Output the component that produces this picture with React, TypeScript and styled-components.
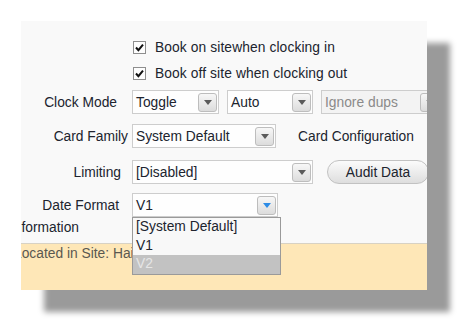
import styled, { createGlobalStyle } from "styled-components";

const GlobalStyle = createGlobalStyle`
  html, body {
    margin: 0;
    padding: 0;
    background: #ffffff;
  }
  body {
    font-family: "Liberation Sans", Arial, sans-serif;
    font-size: 13.8px;
    color: #20242e;
  }
`;

interface SelectProps {
  value: string;
  width: number;
  disabled?: boolean;
  active?: boolean;
}

const Arrow = ({ color }: { color: string }) => (
  <svg width="8" height="5" viewBox="0 0 8 5">
    <path d="M0 0 L8 0 L4 5 Z" fill={color} />
  </svg>
);

const Select = ({ value, width, disabled, active }: SelectProps) => (
  <SelectBox $width={width} $disabled={disabled}>
    <SelectText $disabled={disabled}>{value}</SelectText>
    <ArrowButton>
      <Arrow color={active ? "#2c8be6" : disabled ? "#9a9a9a" : "#5a5a5a"} />
    </ArrowButton>
  </SelectBox>
);

const Check = () => (
  <CheckBox>
    <svg width="11" height="11" viewBox="0 0 11 11">
      <path d="M2 5.5 L4.4 8.2 L9 2.6" fill="none" stroke="#111" strokeWidth="2" />
    </svg>
  </CheckBox>
);

const App = () => {
  return (
    <>
      <GlobalStyle />
      <Stage>
        <Panel>
          <Main>
            <CheckRow $top={20}>
              <Check />
              <CheckLabel>Book on sitewhen clocking in</CheckLabel>
            </CheckRow>
            <CheckRow $top={13}>
              <Check />
              <CheckLabel>Book off site when clocking out</CheckLabel>
            </CheckRow>

            <FormRow $top={10}>
              <Label $pad={15}>Clock Mode</Label>
              <Controls>
                <Select value="Toggle" width={87} />
                <Select value="Auto" width={86} />
                <Select value="Ignore dups" width={120} disabled />
              </Controls>
            </FormRow>

            <FormRow $top={10}>
              <Label $pad={4}>Card Family</Label>
              <Controls>
                <Select value="System Default" width={144} />
                <SideLabel>Card Configuration</SideLabel>
                <EdgeBox />
              </Controls>
            </FormRow>

            <FormRow $top={12}>
              <Label $pad={11}>Limiting</Label>
              <Controls>
                <Select value="[Disabled]" width={181} />
                <PillButton>Audit Data</PillButton>
              </Controls>
            </FormRow>

            <FormRow $top={9}>
              <Label $pad={13}>Date Format</Label>
              <Controls>
                <DropWrap>
                  <Select value="V1" width={146} active />
                  <DropList>
                    <DropItem>[System Default]</DropItem>
                    <DropItem>V1</DropItem>
                    <DropItem $selected>V2</DropItem>
                  </DropList>
                </DropWrap>
              </Controls>
            </FormRow>

            <SectionHeading>Information</SectionHeading>
          </Main>
          <Footer>
            <FooterText>Located in Site: Hailsham</FooterText>
          </Footer>
        </Panel>
      </Stage>
    </>
  );
};

export default App;

const Stage = styled.div`
  padding: 21px 0 0 21px;
  height: 329px;
  box-sizing: border-box;
`;

const Panel = styled.div`
  width: 406px;
  height: 269px;
  background: #f9f9f9;
  box-shadow: 23px 22px 6px #9a9a9a;
  display: flex;
  flex-direction: column;
  overflow: hidden;
  position: relative;
`;

const Main = styled.div`
  height: 222px;
  display: flex;
  flex-direction: column;
  flex-shrink: 0;
`;

const CheckRow = styled.div<{ $top: number }>`
  display: flex;
  align-items: center;
  gap: 9px;
  margin-top: ${(p) => p.$top}px;
  padding-left: 112px;
  height: 13px;
`;

const CheckBox = styled.div`
  width: 11px;
  height: 11px;
  border: 1px solid #8e8e8e;
  background: #fdfdfd;
  display: flex;
  align-items: center;
  justify-content: center;
  flex-shrink: 0;
`;

const CheckLabel = styled.span`
  white-space: nowrap;
  letter-spacing: 0.1px;
`;

const FormRow = styled.div<{ $top: number }>`
  display: flex;
  align-items: center;
  height: 24px;
  margin-top: ${(p) => p.$top}px;
`;

const Label = styled.div<{ $pad: number }>`
  width: 111px;
  flex-shrink: 0;
  box-sizing: border-box;
  text-align: right;
  padding-right: ${(p) => p.$pad}px;
  white-space: nowrap;
`;

const Controls = styled.div`
  display: flex;
  align-items: center;
  gap: 8px;
  flex-shrink: 0;
`;

const SelectBox = styled.div<{ $width: number; $disabled?: boolean }>`
  width: ${(p) => p.$width}px;
  height: 24px;
  box-sizing: border-box;
  flex-shrink: 0;
  border: 1px solid #cdcdcd;
  background: ${(p) => (p.$disabled ? "#f3f3f3" : "#fefefe")};
  display: flex;
  align-items: center;
  justify-content: space-between;
  padding: 0 1px 0 3px;
  overflow: hidden;
`;

const SelectText = styled.span<{ $disabled?: boolean }>`
  color: ${(p) => (p.$disabled ? "#8a8a8a" : "#20242e")};
  white-space: nowrap;
`;

const ArrowButton = styled.div`
  width: 19px;
  height: 19px;
  box-sizing: border-box;
  border: 1px solid #bdbdbd;
  border-radius: 3px;
  background: linear-gradient(#f7f7f7, #dcdcdc);
  display: flex;
  align-items: center;
  justify-content: center;
  flex-shrink: 0;
`;

const SideLabel = styled.span`
  margin-left: 14px;
  white-space: nowrap;
`;

const EdgeBox = styled.div`
  margin-left: 6px;
  width: 40px;
  height: 24px;
  box-sizing: border-box;
  border: 1px solid #c8c8c8;
  background: #f3f3f3;
  flex-shrink: 0;
`;

const PillButton = styled.div`
  margin-left: 6px;
  width: 102px;
  height: 24px;
  box-sizing: border-box;
  border: 1px solid #c2c2c2;
  border-radius: 12px;
  background: linear-gradient(#fbfbfb, #dedede);
  display: flex;
  align-items: center;
  justify-content: center;
  flex-shrink: 0;
  white-space: nowrap;
`;

const DropWrap = styled.div`
  position: relative;
`;

const DropList = styled.div`
  position: absolute;
  top: 24px;
  left: 0;
  width: 149px;
  box-sizing: border-box;
  border: 1px solid #9a9a9a;
  background: #f8f8f8;
  z-index: 5;
  display: flex;
  flex-direction: column;
`;

const DropItem = styled.div<{ $selected?: boolean }>`
  height: 18.5px;
  line-height: 18px;
  padding-left: 3px;
  background: ${(p) => (p.$selected ? "#c2c2c2" : "transparent")};
  color: ${(p) => (p.$selected ? "#e6e6e6" : "#20242e")};
  white-space: nowrap;
`;

const SectionHeading = styled.div`
  margin-top: 2px;
  margin-left: -11px;
  height: 18px;
  line-height: 18px;
  white-space: nowrap;
`;

const Footer = styled.div`
  flex: 1;
  background: #fee7b7;
  border-top: 1px solid #d8d2c4;
  padding-top: 1px;
`;

const FooterText = styled.div`
  margin-left: -7px;
  line-height: 18px;
  color: #5a5850;
  white-space: nowrap;
`;
